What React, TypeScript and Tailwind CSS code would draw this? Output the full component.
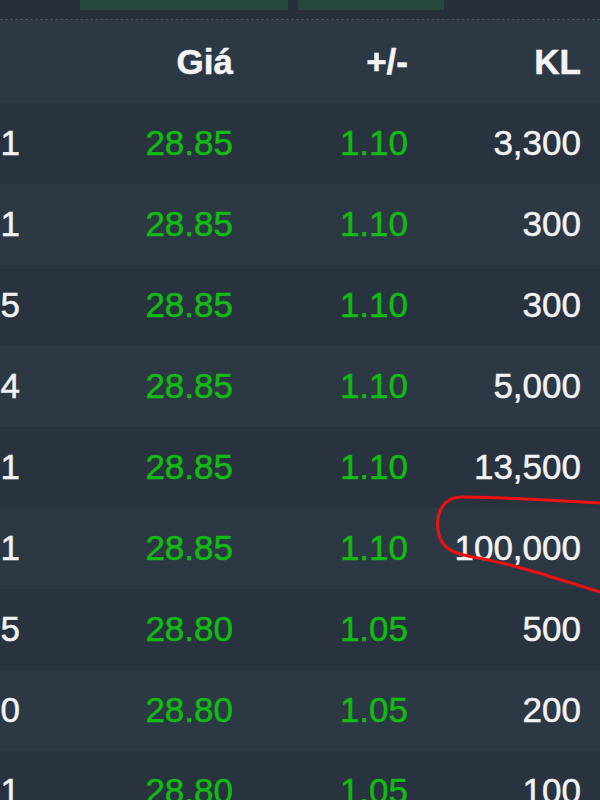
const rows = [
  { t: "1", price: "28.85", chg: "1.10", vol: "3,300" },
  { t: "1", price: "28.85", chg: "1.10", vol: "300" },
  { t: "5", price: "28.85", chg: "1.10", vol: "300" },
  { t: "4", price: "28.85", chg: "1.10", vol: "5,000" },
  { t: "1", price: "28.85", chg: "1.10", vol: "13,500" },
  { t: "1", price: "28.85", chg: "1.10", vol: "100,000" },
  { t: "5", price: "28.80", chg: "1.05", vol: "500" },
  { t: "0", price: "28.80", chg: "1.05", vol: "200" },
  { t: "1", price: "28.80", chg: "1.05", vol: "100" },
];

const cols = "grid grid-cols-[20px_213px_175px_173px] items-center pr-[19px] text-right";

export default function App() {
  return (
    <div
      className="relative w-[600px] h-[800px] overflow-hidden bg-[#28333f] text-[35px] leading-none [-webkit-text-stroke:0.5px_currentColor]"
      style={{ fontFamily: '"Liberation Sans", Arial, sans-serif' }}
    >
      {/* top strip with volume bars */}
      <div className="h-[20px] bg-[#262f3a] border-b border-dashed border-[#46525e] flex gap-[10px] pl-[80px]">
        <div className="w-[208px] h-[10px] bg-[#24483a]" />
        <div className="w-[146px] h-[10px] bg-[#24483a]" />
      </div>

      {/* header */}
      <div className={`${cols} h-[83px] bg-[#2c3945] font-bold text-[#f4f4f4]`}>
        <div />
        <div>Giá</div>
        <div>+/-</div>
        <div>KL</div>
      </div>

      {rows.map((r, i) => (
        <div
          key={i}
          className={`${cols} h-[81px] pb-[3px] ${i % 2 === 0 ? "bg-[#28333f]" : "bg-[#2c3945]"}`}
        >
          <div className="text-[#f2f2f2]">{r.t}</div>
          <div className="text-[#12bb12]">{r.price}</div>
          <div className="text-[#12bb12]">{r.chg}</div>
          <div className="text-[#f2f2f2]">{r.vol}</div>
        </div>
      ))}

      {/* red hand-drawn mark */}
      <svg className="absolute inset-0 pointer-events-none" width="600" height="800">
        <path
          d="M 600 503 C 560 501, 500 497, 462 497 C 442 497, 436 514, 438 530 C 440 547, 452 553, 468 556 C 520 565, 560 580, 600 592"
          fill="none"
          stroke="#ee1111"
          strokeWidth="3"
          strokeLinecap="round"
        />
      </svg>
    </div>
  );
}
